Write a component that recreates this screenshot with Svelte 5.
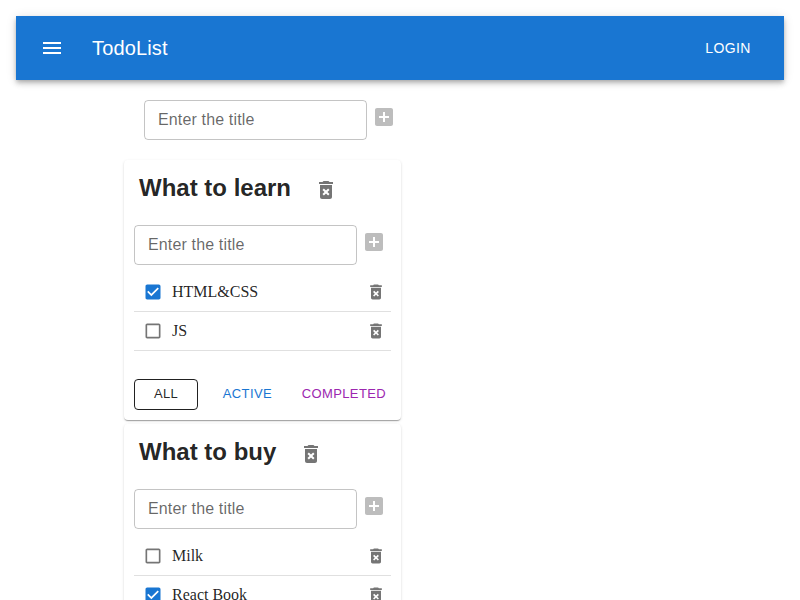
<script>
  let draft = $state('');
  let lists = $state([
    {
      title: 'What to learn',
      filter: 'all',
      draft: '',
      tasks: [
        { title: 'HTML&CSS', done: true },
        { title: 'JS', done: false }
      ]
    },
    {
      title: 'What to buy',
      filter: 'all',
      draft: '',
      tasks: [
        { title: 'Milk', done: false },
        { title: 'React Book', done: true }
      ]
    }
  ]);

  const visible = (list) =>
    list.tasks.filter((t) => list.filter === 'all' || (list.filter === 'completed') === t.done);

  function addList() {
    lists.unshift({ title: draft.trim(), filter: 'all', draft: '', tasks: [] });
    draft = '';
  }

  function addTask(list) {
    list.tasks.unshift({ title: list.draft.trim(), done: false });
    list.draft = '';
  }
</script>

{#snippet addIcon()}
  <svg viewBox="0 0 24 24"><path d="M19 3H5c-1.11 0-2 .9-2 2v14c0 1.1.89 2 2 2h14c1.1 0 2-.9 2-2V5c0-1.1-.9-2-2-2zm-2 10h-4v4h-2v-4H7v-2h4V7h2v4h4v2z" /></svg>
{/snippet}

{#snippet trashIcon()}
  <svg viewBox="0 0 24 24"><path d="M6 19c0 1.1.9 2 2 2h8c1.1 0 2-.9 2-2V7H6v12zm2.46-7.12 1.41-1.41L12 12.59l2.12-2.12 1.41 1.41L13.41 14l2.12 2.12-1.41 1.41L12 15.41l-2.12 2.12-1.41-1.41L10.59 14l-2.13-2.12zM15.5 4l-1-1h-5l-1 1H5v2h14V4z" /></svg>
{/snippet}

<div class="app">
  <header>
    <button class="icon menu" aria-label="menu">
      <svg viewBox="0 0 24 24"><path d="M3 18h18v-2H3v2zm0-5h18v-2H3v2zm0-7v2h18V6H3z" /></svg>
    </button>
    <div class="brand">TodoList</div>
    <button class="login">Login</button>
  </header>

  <main>
    <div class="add new-list">
      <input placeholder="Enter the title" bind:value={draft} />
      <button class="icon" aria-label="add" disabled={!draft.trim()} onclick={addList}>{@render addIcon()}</button>
    </div>

    {#each lists as list, i}
      <section class="card">
        <div class="heading">
          <h3>{list.title}</h3>
          <button class="icon" aria-label="delete" onclick={() => lists.splice(i, 1)}>{@render trashIcon()}</button>
        </div>
        <div class="add">
          <input placeholder="Enter the title" bind:value={list.draft} />
          <button class="icon" aria-label="add" disabled={!list.draft.trim()} onclick={() => addTask(list)}>{@render addIcon()}</button>
        </div>
        <ul>
          {#each visible(list) as task}
            <li>
              <button class="icon small" class:checked={task.done} aria-label="toggle" onclick={() => (task.done = !task.done)}>
                <svg viewBox="0 0 24 24">
                  {#if task.done}
                    <path d="M19 3H5c-1.11 0-2 .9-2 2v14c0 1.1.89 2 2 2h14c1.11 0 2-.9 2-2V5c0-1.1-.89-2-2-2zm-9 14l-5-5 1.41-1.41L10 14.17l7.59-7.59L19 8l-9 9z" />
                  {:else}
                    <path d="M19 5v14H5V5h14m0-2H5c-1.1 0-2 .9-2 2v14c0 1.1.9 2 2 2h14c1.1 0 2-.9 2-2V5c0-1.1-.9-2-2-2z" />
                  {/if}
                </svg>
              </button>
              <span>{task.title}</span>
              <button class="icon small" aria-label="delete" onclick={() => list.tasks.splice(list.tasks.indexOf(task), 1)}>{@render trashIcon()}</button>
            </li>
          {/each}
        </ul>
        <div class="filters">
          {#each ['all', 'active', 'completed'] as name}
            <button class={name} class:selected={list.filter === name} onclick={() => (list.filter = name)}>{name}</button>
          {/each}
        </div>
      </section>
    {/each}
  </main>
</div>

<style>
  :global(body) {
    margin: 0;
    background: #fff;
  }
  .app {
    box-sizing: border-box;
    height: 600px;
    overflow: hidden;
    padding: 16px;
    font-family: 'Liberation Sans', Arial, sans-serif;
    color: rgba(0, 0, 0, 0.87);
  }
  button {
    box-sizing: border-box;
    margin: 0;
    border: 0;
    background: none;
    font-family: inherit;
    text-transform: uppercase;
    letter-spacing: 0.02857em;
    cursor: pointer;
  }
  header {
    box-sizing: border-box;
    display: flex;
    align-items: center;
    height: 64px;
    padding: 0 24px;
    background: #1976d2;
    color: #fff;
    box-shadow:
      0 2px 4px -1px rgba(0, 0, 0, 0.2),
      0 4px 5px 0 rgba(0, 0, 0, 0.14),
      0 1px 10px 0 rgba(0, 0, 0, 0.12);
  }
  .icon {
    display: flex;
    flex: none;
    padding: 8px;
    color: rgba(0, 0, 0, 0.54);
  }
  .icon svg {
    display: block;
    width: 24px;
    height: 24px;
    fill: currentColor;
  }
  .icon:disabled {
    color: rgba(0, 0, 0, 0.26);
    cursor: default;
  }
  .icon.menu {
    margin: 0 20px 0 -8px;
    color: #fff;
  }
  .icon.small {
    padding: 9px;
  }
  .icon.small svg {
    width: 20px;
    height: 20px;
  }
  .icon.checked {
    color: #1976d2;
  }
  .brand {
    flex: 1;
    font-size: 20px;
    line-height: 32px;
    letter-spacing: 0.0075em;
  }
  .login {
    min-width: 64px;
    padding: 6px 8px;
    font-size: 14px;
    line-height: 24.5px;
    color: #fff;
  }
  main {
    width: 277px;
    margin-left: 108px;
  }
  .add {
    display: flex;
    align-items: flex-start;
    height: 40px;
  }
  .add.new-list {
    padding: 20px;
  }
  .add .icon {
    margin: -3px 0 0 -3px;
  }
  input {
    box-sizing: border-box;
    flex: none;
    width: 223px;
    height: 40px;
    padding: 0 13px;
    border: 1px solid rgba(0, 0, 0, 0.23);
    border-radius: 4px;
    background: none;
    outline: none;
    font: 16px 'Liberation Sans', Arial, sans-serif;
    letter-spacing: 0.15px;
    color: inherit;
  }
  input::placeholder {
    color: rgba(0, 0, 0, 0.6);
    opacity: 1;
  }
  .card {
    box-sizing: border-box;
    margin-bottom: 4px;
    padding: 10px;
    border-radius: 4px;
    background: #fff;
    box-shadow:
      0 2px 1px -1px rgba(0, 0, 0, 0.2),
      0 1px 1px 0 rgba(0, 0, 0, 0.14),
      0 1px 3px 0 rgba(0, 0, 0, 0.12);
  }
  .heading {
    display: flex;
    align-items: flex-start;
    height: 55px;
    padding-left: 5px;
  }
  h3 {
    margin: 2px 15px 0 0;
    font-size: 24px;
    line-height: 32px;
    font-weight: 700;
  }
  ul {
    margin: 8px 0 28px;
    padding: 0;
    list-style: none;
  }
  li {
    box-sizing: border-box;
    display: flex;
    align-items: center;
    height: 39px;
    border-bottom: 1px solid rgba(0, 0, 0, 0.12);
  }
  li span {
    flex: 1;
    font: 16px/24px 'Liberation Serif', 'Times New Roman', serif;
  }
  li .icon:last-child {
    margin-right: -4px;
  }
  .filters {
    display: flex;
    justify-content: space-between;
  }
  .filters button {
    min-width: 64px;
    height: 31px;
    padding: 0 5px;
    border-radius: 4px;
    font-size: 13px;
    line-height: 22.75px;
  }
  .filters .selected {
    border: 1px solid currentColor;
    padding: 0 4px;
  }
  .all {
    color: rgba(0, 0, 0, 0.87);
  }
  .active {
    color: #1976d2;
  }
  .completed {
    color: #9c27b0;
  }
</style>
